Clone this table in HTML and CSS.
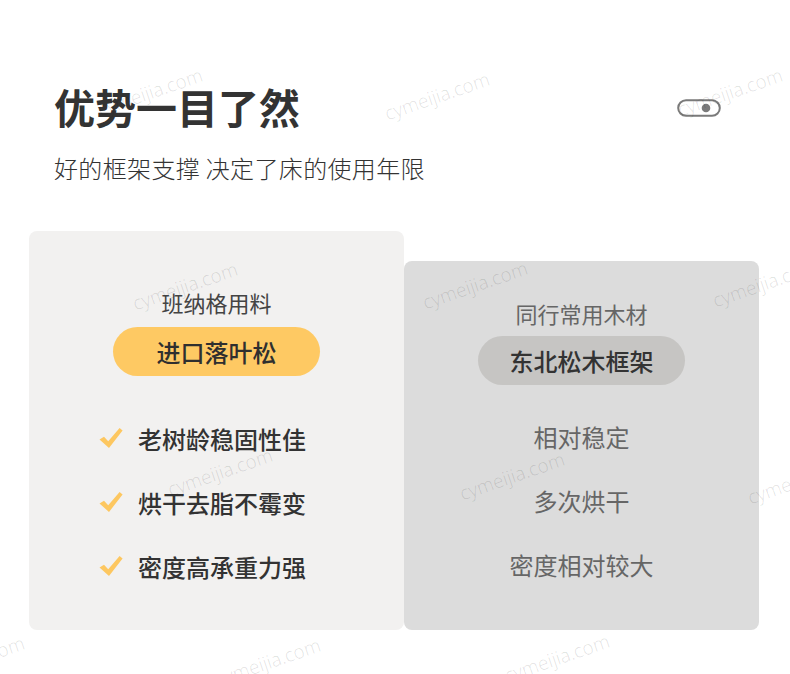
FILE: index.html
```html
<!DOCTYPE html>
<html lang="zh-CN">
<head>
<meta charset="utf-8">
<title>优势一目了然</title>
<link rel="stylesheet" href="styles.css">
</head>
<body>
<div class="page">
  <header class="header">
    <div class="head-row">
      <h1 class="title">优势一目了然</h1>
      <svg class="toggle" width="44" height="18" viewBox="0 0 44 18" aria-hidden="true">
        <rect x="1.2" y="1.2" width="41.6" height="15.6" rx="7.8" fill="none" stroke="#7a7a7a" stroke-width="2"/>
        <circle cx="29" cy="9" r="4.3" fill="#7a7a7a"/>
      </svg>
    </div>
    <p class="subtitle">好的框架支撑 决定了床的使用年限</p>
  </header>

  <section class="compare">
    <div class="card card-main">
      <div class="label">班纳格用料</div>
      <div class="pill pill-yellow">进口落叶松</div>
      <ul class="list">
        <li class="item"><svg class="check" width="24" height="22" viewBox="0 0 24 22" aria-hidden="true"><path d="M0.5 12.5 L5 9.8 L9.2 14.2 L20.6 1 L23.6 3.6 L10 21 Z" fill="#fdc760"/></svg><span>老树龄稳固性佳</span></li>
        <li class="item"><svg class="check" width="24" height="22" viewBox="0 0 24 22" aria-hidden="true"><path d="M0.5 12.5 L5 9.8 L9.2 14.2 L20.6 1 L23.6 3.6 L10 21 Z" fill="#fdc760"/></svg><span>烘干去脂不霉变</span></li>
        <li class="item"><svg class="check" width="24" height="22" viewBox="0 0 24 22" aria-hidden="true"><path d="M0.5 12.5 L5 9.8 L9.2 14.2 L20.6 1 L23.6 3.6 L10 21 Z" fill="#fdc760"/></svg><span>密度高承重力强</span></li>
      </ul>
    </div>
    <div class="card card-alt">
      <div class="label label-alt">同行常用木材</div>
      <div class="pill pill-grey">东北松木框架</div>
      <ul class="list list-alt">
        <li class="item item-alt">相对稳定</li>
        <li class="item item-alt">多次烘干</li>
        <li class="item item-alt">密度相对较大</li>
      </ul>
    </div>
  </section>

  <div class="watermarks" aria-hidden="true">
    <span class="wm" style="left:150px;top:92px">cymeijia.com</span>
    <span class="wm" style="left:437px;top:96px">cymeijia.com</span>
    <span class="wm" style="left:730px;top:92px">cymeijia.com</span>
    <span class="wm" style="left:185px;top:286px">cymeijia.com</span>
    <span class="wm" style="left:475px;top:285px">cymeijia.com</span>
    <span class="wm" style="left:765px;top:283px">cymeijia.com</span>
    <span class="wm" style="left:220px;top:472px">cymeijia.com</span>
    <span class="wm" style="left:512px;top:476px">cymeijia.com</span>
    <span class="wm" style="left:800px;top:480px">cymeijia.com</span>
    <span class="wm" style="left:-28px;top:660px">cymeijia.com</span>
    <span class="wm" style="left:268px;top:662px">cymeijia.com</span>
    <span class="wm" style="left:557px;top:658px">cymeijia.com</span>
  </div>
</div>
</body>
</html>
```
FILE: styles.css
```css
* { box-sizing: border-box; }
html, body {
  margin: 0;
  padding: 0;
  background: #ffffff;
}
body {
  font-family: "Noto Sans CJK SC", "Noto Sans", sans-serif;
  color: #333;
}
.page {
  position: relative;
  width: 790px;
  height: 674px;
  overflow: hidden;
}
.header {
  padding: 80px 69px 0 54px;
}
.head-row {
  display: flex;
  justify-content: space-between;
  align-items: center;
}
.title {
  margin: 0;
  font-size: 41px;
  line-height: 52px;
  font-weight: 700;
  color: #333;
  letter-spacing: 0;
}
.toggle {
  display: block;
  margin-top: 4px;
}
.subtitle {
  margin: 20px 0 0 0;
  font-size: 24px;
  line-height: 32px;
  font-weight: 300;
  letter-spacing: 0.35px;
  color: #333;
}
.compare {
  display: flex;
  align-items: flex-start;
  margin: 47px 0 0 29px;
}
.card {
  border-radius: 8px;
  display: flex;
  flex-direction: column;
  align-items: center;
}
.card-main {
  position: relative;
  z-index: 1;
  width: 375px;
  height: 399px;
  background: #f2f1f0;
  padding-top: 57px;
}
.card-alt {
  width: 355px;
  height: 369px;
  margin-top: 30px;
  background: #dcdcdc;
  padding-top: 38px;
}
.label {
  font-size: 22px;
  line-height: 28px;
  color: #444;
  font-weight: 400;
}
.label-alt {
  color: #666;
}
.pill {
  margin-top: 11px;
  width: 207px;
  height: 49px;
  border-radius: 25px;
  display: flex;
  align-items: center;
  justify-content: center;
  font-size: 24px;
  font-weight: 500;
  color: #2f2f2f;
}
.pill-yellow {
  background: #fec963;
}
.pill-grey {
  margin-top: 9px;
  background: #c6c5c3;
  color: #333;
}
.list {
  list-style: none;
  margin: 42px 0 0 0;
  padding: 0;
  display: flex;
  flex-direction: column;
  gap: 24px;
  align-self: stretch;
  padding-left: 70px;
}
.list-alt {
  margin-top: 31px;
  padding-left: 0;
  align-items: center;
}
.item {
  display: flex;
  align-items: center;
  height: 40px;
  font-size: 24px;
  color: #333;
  font-weight: 500;
}
.check {
  display: block;
  margin-right: 15px;
  flex: none;
}
.item-alt {
  color: #666;
  font-weight: 400;
}
.watermarks {
  position: absolute;
  inset: 0;
  z-index: 5;
  pointer-events: none;
}
.wm {
  position: absolute;
  transform: translate(-50%, -50%) rotate(-19deg);
  font-family: "Open Sans", "DejaVu Sans", sans-serif;
  font-size: 19px;
  font-weight: 300;
  color: rgba(0, 0, 0, 0.12);
  white-space: nowrap;
}
```
